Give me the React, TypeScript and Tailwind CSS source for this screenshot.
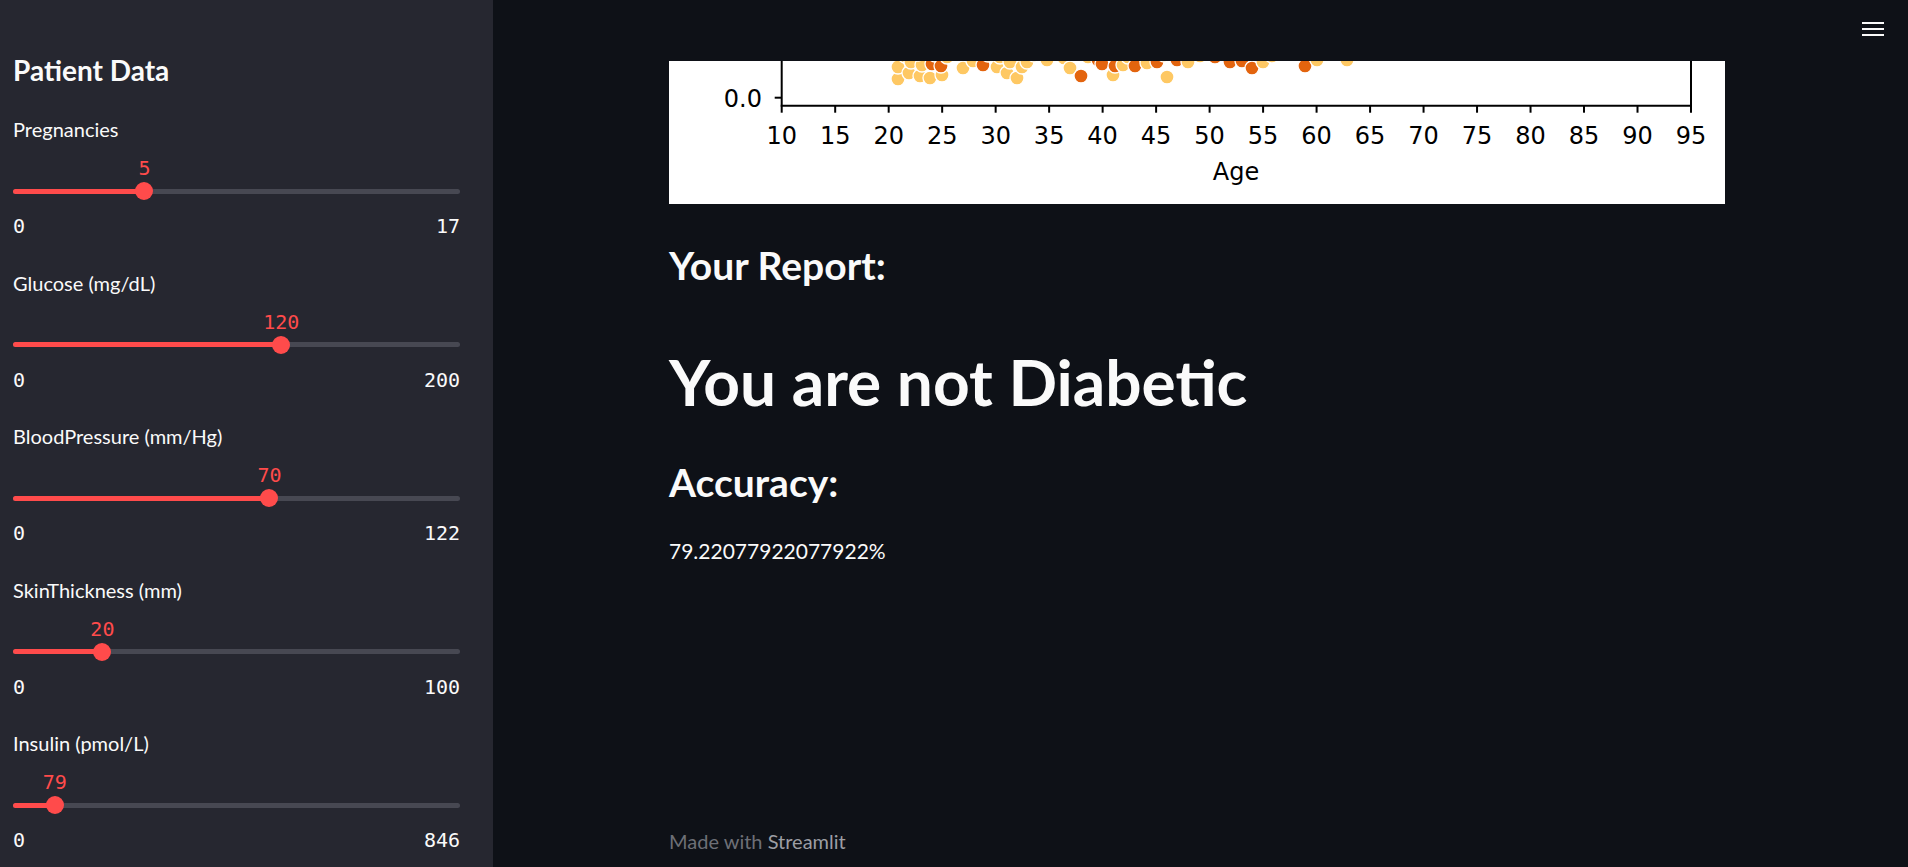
import React from "react";

type Dot = [number, number, "L" | "D"];

const dots: Dot[] = [
  // cluster ages 21-25
  [898, 79, "L"], [898, 67, "L"], [905, 56, "L"], [909, 73, "L"], [911, 62, "L"], [920, 76, "L"],
  [922, 65, "L"], [918, 54, "L"], [930, 78, "L"], [932, 64, "D"], [935, 55, "L"], [942, 75, "L"],
  [941, 66, "D"], [947, 57, "L"],
  // 27-33
  [963, 68, "L"], [973, 61, "L"], [983, 65, "D"], [988, 55, "L"], [997, 67, "L"], [1000, 57, "L"],
  [1007, 73, "L"], [1010, 62, "L"], [1017, 78, "L"], [1022, 67, "L"], [1027, 62, "L"], [1034, 55, "L"],
  [1047, 60, "L"],
  // 36-45
  [1064, 58, "L"], [1070, 68, "L"], [1081, 76, "D"], [1088, 57, "L"], [1098, 60, "D"], [1102, 64, "D"],
  [1113, 75, "L"], [1115, 66, "D"], [1123, 65, "L"], [1128, 57, "L"], [1135, 66, "D"], [1147, 63, "L"],
  [1157, 62, "D"], [1164, 55, "L"],
  // 46-60
  [1167, 77, "L"], [1177, 60, "D"], [1188, 62, "L"], [1200, 56, "L"], [1215, 57, "D"], [1230, 62, "D"],
  [1242, 61, "D"], [1252, 68, "D"], [1263, 62, "L"], [1272, 56, "L"], [1305, 66, "D"], [1317, 60, "L"],
  [1347, 60, "L"],
];

function Chart() {
  const ox = 669;
  const oy = 61;
  const left = 112.7;
  const right = 1022;
  const bottom = 44.7;
  const step = (right - left) / 17;
  const ticks = Array.from({ length: 18 }, (_, i) => 10 + i * 5);
  return (
    <div className="w-[1056px] h-[143px] bg-white overflow-hidden">
      <svg width="1056" height="143" viewBox="0 0 1056 143">
        {dots.map(([x, y, c], i) => (
          <circle
            key={i}
            cx={x - ox}
            cy={y - oy}
            r="7"
            fill={c === "L" ? "#fec863" : "#e3640e"}
            stroke="#ffffff"
            strokeWidth="1.3"
          />
        ))}
        <line x1={left} y1={-2} x2={left} y2={bottom} stroke="#000" strokeWidth="2" />
        <line x1={right} y1={-2} x2={right} y2={bottom} stroke="#000" strokeWidth="2" />
        <line x1={left - 1} y1={bottom} x2={right + 1} y2={bottom} stroke="#000" strokeWidth="2" />
        <line x1={left - 7} y1={36.7} x2={left} y2={36.7} stroke="#000" strokeWidth="2" />
        <text
          x={93}
          y={45.5}
          textAnchor="end"
          fontFamily="'DejaVu Sans', sans-serif"
          fontSize="24"
          fill="#000"
        >
          0.0
        </text>
        {ticks.map((t, i) => {
          const x = left + i * step;
          return (
            <g key={t}>
              <line x1={x} y1={bottom} x2={x} y2={bottom + 7} stroke="#000" strokeWidth="2" />
              <text
                x={x}
                y={82.7}
                textAnchor="middle"
                fontFamily="'DejaVu Sans', sans-serif"
                fontSize="24"
                fill="#000"
              >
                {t}
              </text>
            </g>
          );
        })}
        <text
          x={567}
          y={119}
          textAnchor="middle"
          fontFamily="'DejaVu Sans', sans-serif"
          fontSize="24"
          fill="#000"
        >
          Age
        </text>
      </svg>
    </div>
  );
}

function Slider({ label, value, max }: { label: string; value: number; max: number }) {
  const pct = (value / max) * 100;
  return (
    <div className="flex flex-col">
      <div className="h-[28px] text-[20px] leading-[28px] text-[#fafafa]">{label}</div>
      <div className="relative mt-[13px] h-[24px]">
        <div
          className="absolute top-0 -translate-x-1/2 text-[20px] leading-[24px] text-[#ff4b4b] font-['DejaVu_Sans_Mono',monospace]"
          style={{ left: `${pct}%` }}
        >
          {value}
        </div>
      </div>
      <div className="relative mt-[2px] h-[18px] flex items-center">
        <div className="w-full h-[5px] rounded-full bg-[#474852] overflow-hidden">
          <div className="h-full bg-[#ff4b4b]" style={{ width: `${pct}%` }} />
        </div>
        <div
          className="absolute top-0 -translate-x-1/2 w-[18px] h-[18px] rounded-full bg-[#ff4b4b]"
          style={{ left: `${pct}%` }}
        />
      </div>
      <div className="mt-[14px] h-[24px] flex justify-between text-[20px] leading-[24px] text-[#fafafa] font-['DejaVu_Sans_Mono',monospace]">
        <span>0</span>
        <span>{max}</span>
      </div>
    </div>
  );
}

export default function App() {
  const sliders = [
    { label: "Pregnancies", value: 5, max: 17 },
    { label: "Glucose (mg/dL)", value: 120, max: 200 },
    { label: "BloodPressure (mm/Hg)", value: 70, max: 122 },
    { label: "SkinThickness (mm)", value: 20, max: 100 },
    { label: "Insulin (pmol/L)", value: 79, max: 846 },
  ];
  return (
    <div className="flex w-[1908px] h-[867px] overflow-hidden bg-[#0e1117] font-['Lato',sans-serif] text-[#fafafa]">
      <aside className="w-[493px] shrink-0 h-full bg-[#262730] pl-[13px] pr-[33px] pt-[52px]">
        <div className="h-[36px] text-[28px] leading-[36px] font-bold">Patient Data</div>
        <div className="mt-[27px] flex flex-col gap-[30.5px]">
          {sliders.map((s) => (
            <Slider key={s.label} {...s} />
          ))}
        </div>
      </aside>
      <main className="flex-1 h-full flex flex-col">
        <div className="h-[61px] shrink-0 flex justify-end items-start pt-[22px] pr-[24px]">
          <div className="flex flex-col gap-[4px]">
            <div className="w-[22px] h-[2px] bg-[#fafafa]" />
            <div className="w-[22px] h-[2px] bg-[#fafafa]" />
            <div className="w-[22px] h-[2px] bg-[#fafafa]" />
          </div>
        </div>
        <div className="pl-[176px] flex flex-col flex-1">
          <Chart />
          <div className="mt-[36px] h-[50px] text-[39px] leading-[50px] font-bold">Your Report:</div>
          <div className="mt-[57px] h-[70px] text-[64px] leading-[70px] font-bold">You are not Diabetic</div>
          <div className="mt-[40px] h-[50px] text-[39px] leading-[50px] font-bold">Accuracy:</div>
          <div className="mt-[29px] h-[30px] text-[21px] leading-[30px]">79.22077922077922%</div>
          <div className="mt-auto mb-[12px] h-[28px] text-[20px] leading-[28px] text-[#6d6f76]">
            Made with <span className="text-[#9c9ea4]">Streamlit</span>
          </div>
        </div>
      </main>
    </div>
  );
}
